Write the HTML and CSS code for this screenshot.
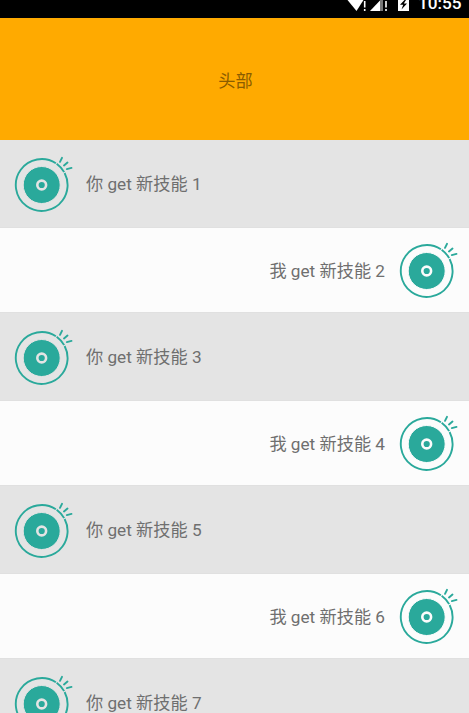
FILE: index.html
```html
<!DOCTYPE html>
<html lang="zh-CN">
<head>
  <meta charset="UTF-8" />
  <meta name="viewport" content="width=device-width, initial-scale=1.0" />
  <title>新技能</title>
  <link rel="stylesheet" href="styles.css">
</head>
<body>
  <svg class="defs" width="0" height="0">
    <symbol id="disc" viewBox="0 0 60 60">
      <g fill="none" stroke="#2aa99b" stroke-width="1.9">
        <circle cx="27.7" cy="30" r="25.9" pathLength="360" stroke-dasharray="267 2.2 25 2.2 63.6 0" transform="rotate(36 27.7 30)" />
        <path d="M48 2.8L46 6.8M53.5 7.5L50 10.4M57.5 12.9L52.8 14.1" stroke-linecap="round" />
      </g>
      <circle cx="27.7" cy="30" r="18.5" fill="#2aa99b" />
      <circle class="hole" cx="27.7" cy="30" r="4.4" fill="none" stroke-width="2.6" />
    </symbol>
  </svg>

  <div class="status-bar">
    <svg class="signals" width="70" height="17" viewBox="0 0 70 17">
      <path d="M1.5 0H17.5L10.5 11Z" fill="#fff" />
      <path d="M18.7 1V7.5M18.7 9V11" stroke="#fff" stroke-width="1.6" />
      <path d="M24 11L34 0.5V11Z" fill="#fff" />
      <path d="M34 0H37V11H34Z" fill="#777" />
      <path d="M40 1V7.5M40 9V11" stroke="#fff" stroke-width="1.6" />
      <path d="M52 0H63V11H52Z" fill="#fff" />
      <path d="M58.5 0L54 4.8H57.2L55.5 9.5L61 3.5H57.8L60 0Z" fill="#000" />
    </svg>
    <span class="time">10:55</span>
  </div>

  <div class="header"><span>头部</span></div>

  <div class="list">
    <div class="item you"><svg class="icon"><use href="#disc" /></svg><span>你 get 新技能 1</span></div>
    <div class="item me"><span>我 get 新技能 2</span><svg class="icon"><use href="#disc" /></svg></div>
    <div class="item you"><svg class="icon"><use href="#disc" /></svg><span>你 get 新技能 3</span></div>
    <div class="item me"><span>我 get 新技能 4</span><svg class="icon"><use href="#disc" /></svg></div>
    <div class="item you"><svg class="icon"><use href="#disc" /></svg><span>你 get 新技能 5</span></div>
    <div class="item me"><span>我 get 新技能 6</span><svg class="icon"><use href="#disc" /></svg></div>
    <div class="item you"><svg class="icon"><use href="#disc" /></svg><span>你 get 新技能 7</span></div>
  </div>
</body>
</html>
```
FILE: styles.css
```css
body {
  margin: 0;
  height: 713px;
  overflow: hidden;
  display: flex;
  flex-direction: column;
  background-color: #fcfcfc;
  color: #6f6f6f;
  font-family: Roboto, "Noto Sans CJK SC", sans-serif;
  font-size: 17.2px;
}
.defs {
  display: none;
}
.status-bar {
  height: 18px;
  flex-shrink: 0;
  display: flex;
  justify-content: flex-end;
  background-color: #000;
  overflow: hidden;
}
.time {
  width: 43px;
  margin: -7px 8px 0 2px;
  color: #fff;
  font-size: 17.2px;
  font-weight: 500;
  line-height: 21px;
  text-align: right;
}
.header {
  height: 122px;
  flex-shrink: 0;
  display: flex;
  justify-content: center;
  align-items: center;
  background-color: #ffaa00;
  color: #8a5c00;
}
.header span {
  padding-left: 2px;
}
.item {
  box-sizing: border-box;
  display: flex;
  align-items: center;
}
.item span {
  padding-bottom: 1px;
}
.you {
  height: 87.5px;
  padding-left: 14px;
  gap: 12px;
  background-color: #e4e4e4;
  stroke: #e4e4e4;
  border-bottom: 1px solid #e0e0e0;
}
.me {
  height: 85.5px;
  justify-content: flex-end;
  padding-right: 10px;
  gap: 14px;
  background-color: #fcfcfc;
  stroke: #fcfcfc;
  border-bottom: 1px solid #e0e0e0;
}
.icon {
  width: 60px;
  height: 60px;
  margin-top: 2.5px;
}
.icon circle[fill="#2aa99b"] {
  stroke: none;
}
```
